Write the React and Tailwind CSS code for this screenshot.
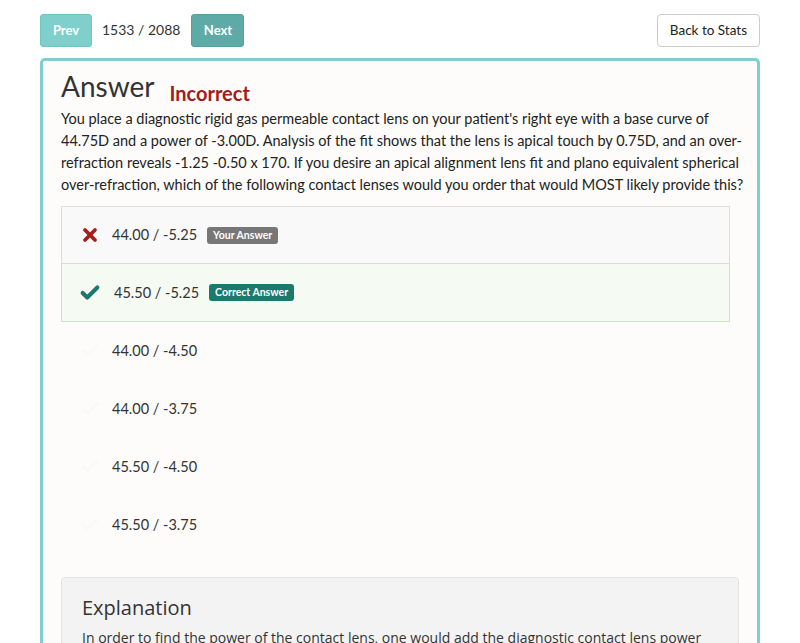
import { Check, X } from 'lucide-react';

const options = [
  { text: '44.00 / -5.25', state: 'wrong' },
  { text: '45.50 / -5.25', state: 'right' },
  { text: '44.00 / -4.50' },
  { text: '44.00 / -3.75' },
  { text: '45.50 / -4.50' },
  { text: '45.50 / -3.75' },
];

const question = [
  "You place a diagnostic rigid gas permeable contact lens on your patient's right eye with a base curve of",
  '44.75D and a power of -3.00D. Analysis of the fit shows that the lens is apical touch by 0.75D, and an over-',
  'refraction reveals -1.25 -0.50 x 170. If you desire an apical alignment lens fit and plano equivalent spherical',
  'over-refraction, which of the following contact lenses would you order that would MOST likely provide this?',
];

function Option({ text, state }) {
  let row = 'border border-transparent';
  if (state === 'wrong') row = 'bg-[#f9f9f9] border border-[#dcdcdc]';
  if (state === 'right') row = 'bg-[#f5faf3] border border-[#cde3c6] border-t-0';

  return (
    <div className={`h-[58px] flex items-center pl-[16px] ${row}`}>
      <div className="w-[24px] flex justify-center">
        {state === 'wrong' && <X className="w-[20px] h-[20px] text-[#a51d1d]" strokeWidth={4.5} />}
        {state === 'right' && <Check className="w-[22px] h-[22px] text-[#1b7a6b]" strokeWidth={4.5} />}
        {!state && <Check className="w-[20px] h-[20px] text-[#faf9f7]" strokeWidth={4} />}
      </div>
      <span className={`text-[14.5px] text-[#333] ${state === 'right' ? 'ml-[12px]' : 'ml-[10px]'}`}>{text}</span>
      {state === 'wrong' && (
        <span className="ml-[10px] bg-[#777777] text-white text-[10.5px] font-bold rounded-[3px] px-[6px] py-[1px] leading-[15px]">
          Your Answer
        </span>
      )}
      {state === 'right' && (
        <span className="ml-[10px] bg-[#1b7a6b] text-white text-[10.5px] font-bold rounded-[3px] px-[6px] py-[1px] leading-[15px]">
          Correct Answer
        </span>
      )}
    </div>
  );
}

export default function App() {
  return (
    <div className="h-[643px] bg-white px-10 pt-[14px] overflow-hidden" style={{ fontFamily: 'Lato, "Open Sans", sans-serif' }}>
      {/* Nav */}
      <div className="flex items-center h-[33px]">
        <button className="h-[33px] w-[52px] rounded-[3px] bg-[#7fd0cc] border border-[#72c4c0] text-white text-[13px] font-bold">
          Prev
        </button>
        <span className="ml-[10px] text-[14px] text-[#333] -mt-[3px]">1533 / 2088</span>
        <button className="ml-[11px] h-[33px] w-[53px] rounded-[3px] bg-[#5eaaa7] border border-[#559f9c] text-white text-[13px] font-bold">
          Next
        </button>
        <button className="ml-auto h-[33px] px-[12px] rounded-[4px] bg-white border border-[#cccccc] text-[13.5px] text-[#222]">
          Back to Stats
        </button>
      </div>

      {/* Card */}
      <div className="mt-[11px] border-[3px] border-b-0 border-[#7ecfcd] rounded-t-[5px] bg-[#fdfcfa] px-[18px] pt-[6px] pb-[20px]">
        <div className="flex items-baseline">
          <h1 className="text-[28px] text-[#333] leading-[38px]">Answer</h1>
          <span className="ml-[15px] text-[20px] font-bold text-[#a31b1b] translate-y-[4px]">Incorrect</span>
        </div>
        <p className="mt-[3px] text-[14.5px] leading-[22px] text-[#222]">
          {question.map((line) => (
            <span key={line} className="block whitespace-nowrap">{line}</span>
          ))}
        </p>

        <div className="mt-[10px] mr-[9px]">
          {options.map((o) => (
            <Option key={o.text} {...o} />
          ))}
        </div>

        <div className="mt-[23px] bg-[#f3f3f3] border border-[#e3e3e3] rounded-[4px] px-[20px] pt-[16px] pb-[20px]" style={{ fontFamily: '"Open Sans", sans-serif' }}>
          <h2 className="text-[20px] text-[#333] leading-[28px]">Explanation</h2>
          <p className="mt-[6px] text-[14px] leading-[20px] text-[#333]">
            In order to find the power of the contact lens, one would add the diagnostic contact lens power
            and the over-refraction power, adjusting for the change in tear lens power.
          </p>
        </div>
      </div>
    </div>
  );
}
